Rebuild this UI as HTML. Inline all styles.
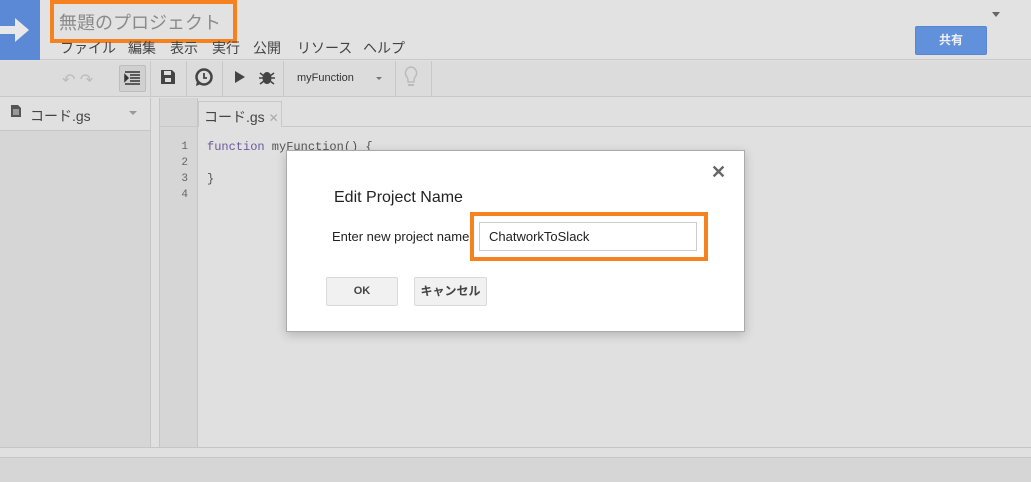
<!DOCTYPE html>
<html><head><meta charset="utf-8"><style>
*{margin:0;padding:0;box-sizing:border-box}
body{width:1031px;height:482px;overflow:hidden;background:#e0e0e0;font-family:"Liberation Sans","Noto Sans CJK JP",sans-serif;position:relative}
.a{position:absolute}
.m{position:absolute;top:38px;font-size:14px;color:#444}
</style></head><body>
<div class="a" style="left:0;top:0;width:1031px;height:60px;background:#e2e2e2;border-bottom:1px solid #c8c8c8"></div>
<div class="a" style="left:0;top:0;width:40px;height:60px;background:#5b89d6"></div>
<svg class="a" style="left:0;top:15px" width="32" height="30" viewBox="0 0 32 30"><path d="M0 11h15V3l14 12-14 12v-8H0z" fill="#e8e8e8"/></svg>
<div class="a" style="left:50px;top:0;width:187px;height:43px;border:4px solid #f5821f"></div>
<div class="a" style="left:59px;top:9px;font-size:18px;color:#8a8a8a">無題のプロジェクト</div>
<div class="m" style="left:60px">ファイル</div>
<div class="m" style="left:128px">編集</div>
<div class="m" style="left:170px">表示</div>
<div class="m" style="left:212px">実行</div>
<div class="m" style="left:253px">公開</div>
<div class="m" style="left:297px">リソース</div>
<div class="m" style="left:363px">ヘルプ</div>
<div class="a" style="left:915px;top:26px;width:72px;height:29px;background:#6291dc;border:1px solid #5a86cf;border-radius:2px;color:#f0f0f0;font-size:12px;font-weight:bold;text-align:center;line-height:27px">共有</div>
<div class="a" style="left:992px;top:12px;width:0;height:0;border-left:4px solid transparent;border-right:4px solid transparent;border-top:5px solid #666"></div>
<div class="a" style="left:0;top:61px;width:1031px;height:36px;background:#dcdcdc;border-bottom:1px solid #c8c8c8"></div>
<div class="a" style="left:62px;top:70px;font-size:16px;color:#bbb">↶ ↷</div>
<div class="a" style="left:119px;top:65px;width:27px;height:27px;background:#d0d0d0;border:1px solid #bdbdbd;border-radius:2px"></div>
<svg class="a" style="left:124px;top:71px" width="17" height="14"><path d="M1 1h15M6 4h10M6 7h10M6 10h10M1 13h15M1 4l3 3-3 3z" stroke="#333" stroke-width="1.5" fill="#333"/></svg>
<div class="a" style="left:150px;top:61px;width:1px;height:36px;background:#c8c8c8"></div>
<svg class="a" style="left:161px;top:70px" width="14" height="14"><path d="M0 0h11l3 3v11H0z" fill="#444"/><rect x="3" y="1" width="7" height="4" fill="#ddd"/><rect x="4" y="8" width="6" height="4" fill="#ddd"/></svg>
<div class="a" style="left:186px;top:61px;width:1px;height:36px;background:#c8c8c8"></div>
<svg class="a" style="left:195px;top:68px" width="19" height="19"><circle cx="9" cy="9" r="7.5" fill="none" stroke="#444" stroke-width="2.5"/><path d="M9 5v5h3" stroke="#444" stroke-width="1.8" fill="none"/><path d="M2 13l-1 5 5-2" fill="#444"/></svg>
<div class="a" style="left:222px;top:61px;width:1px;height:36px;background:#c8c8c8"></div>
<svg class="a" style="left:235px;top:71px" width="10" height="12"><path d="M0 0l10 6-10 6z" fill="#444"/></svg>
<svg class="a" style="left:258px;top:68px" width="18" height="18"><ellipse cx="9" cy="10" rx="4.5" ry="6" fill="#444"/><path d="M2 5l4 3M16 5l-4 3M1 10h4M17 10h-4M2 16l4-3M16 16l-4-3" stroke="#444" stroke-width="1.5"/></svg>
<div class="a" style="left:283px;top:61px;width:1px;height:36px;background:#c8c8c8"></div>
<div class="a" style="left:297px;top:72px;font-size:11px;color:#333">myFunction</div>
<div class="a" style="left:376px;top:77px;border-left:3px solid transparent;border-right:3px solid transparent;border-top:3px solid #777"></div>
<div class="a" style="left:395px;top:61px;width:1px;height:36px;background:#c8c8c8"></div>
<svg class="a" style="left:403px;top:66px" width="16" height="22"><path d="M8 1a6 6 0 0 0-4 10c1 1 1 3 1 5h6c0-2 0-4 1-5A6 6 0 0 0 8 1z" fill="none" stroke="#bbb" stroke-width="1.5"/><rect x="5" y="18" width="6" height="2" fill="#bbb"/></svg>
<div class="a" style="left:431px;top:61px;width:1px;height:36px;background:#c8c8c8"></div>
<div class="a" style="left:0;top:98px;width:151px;height:350px;background:#d6d6d6;border-right:1px solid #c6c6c6"></div>
<div class="a" style="left:0;top:98px;width:150px;height:33px;background:#e0e0e0;border-bottom:1px solid #c6c6c6"></div>
<svg class="a" style="left:11px;top:105px" width="10" height="12"><path d="M0 0h7l3 3v9H0z" fill="#555"/><path d="M2 5h6M2 7h6M2 9h6" stroke="#ddd"/></svg>
<div class="a" style="left:30px;top:106px;font-size:14px;color:#444">コード.gs</div>
<div class="a" style="left:129px;top:111px;border-left:4px solid transparent;border-right:4px solid transparent;border-top:4px solid #999"></div>
<div class="a" style="left:159px;top:98px;width:39px;height:350px;background:#d6d6d6;border-left:1px solid #c6c6c6;border-right:1px solid #c6c6c6"></div>
<div class="a" style="left:159px;top:126px;width:872px;height:1px;background:#c8c8c8"></div>
<div class="a" style="left:198px;top:101px;width:84px;height:26px;background:#e0e0e0;border:1px solid #c8c8c8;border-bottom:none"></div>
<div class="a" style="left:204px;top:107px;font-size:14px;color:#444">コード.gs <span style="color:#aaa;font-size:12px">✕</span></div>
<div class="a" style="left:175px;top:139px;font-family:'Liberation Mono',monospace;font-size:11px;line-height:16px;color:#666;text-align:right;width:13px">1<br>2<br>3<br>4</div>
<div class="a" style="left:207px;top:139px;font-family:'Liberation Mono',monospace;font-size:12px;line-height:16px;color:#555;white-space:pre"><span style="color:#6a5a9a">function</span> myFunction() {

}</div>
<div class="a" style="left:0;top:447px;width:1031px;height:1px;background:#c6c6c6"></div>
<div class="a" style="left:0;top:457px;width:1031px;height:25px;background:#d6d6d6;border-top:1px solid #c6c6c6"></div>
<div class="a" style="left:286px;top:150px;width:459px;height:182px;background:#fff;border:1px solid #aaa;box-shadow:0 3px 10px rgba(0,0,0,.2)"></div>
<div class="a" style="left:711px;top:162px;font-size:18px;color:#666;font-weight:bold">✕</div>
<div class="a" style="left:334px;top:189px;font-size:16px;color:#222">Edit Project Name</div>
<div class="a" style="left:332px;top:229px;font-size:13px;color:#222">Enter new project name</div>
<div class="a" style="left:470px;top:212px;width:238px;height:49px;border:4px solid #f5821f"></div>
<div class="a" style="left:479px;top:222px;width:218px;height:29px;border:1px solid #ccc"></div>
<div class="a" style="left:489px;top:229px;font-size:13px;color:#222">ChatworkToSlack</div>
<div class="a" style="left:326px;top:277px;width:72px;height:29px;background:#f1f1f1;border:1px solid #d9d9d9;border-radius:2px;font-size:11px;font-weight:bold;color:#444;text-align:center;line-height:27px">OK</div>
<div class="a" style="left:414px;top:277px;width:73px;height:29px;background:#f1f1f1;border:1px solid #d9d9d9;border-radius:2px;font-size:12px;font-weight:bold;color:#444;text-align:center;line-height:27px">キャンセル</div>
</body></html>
